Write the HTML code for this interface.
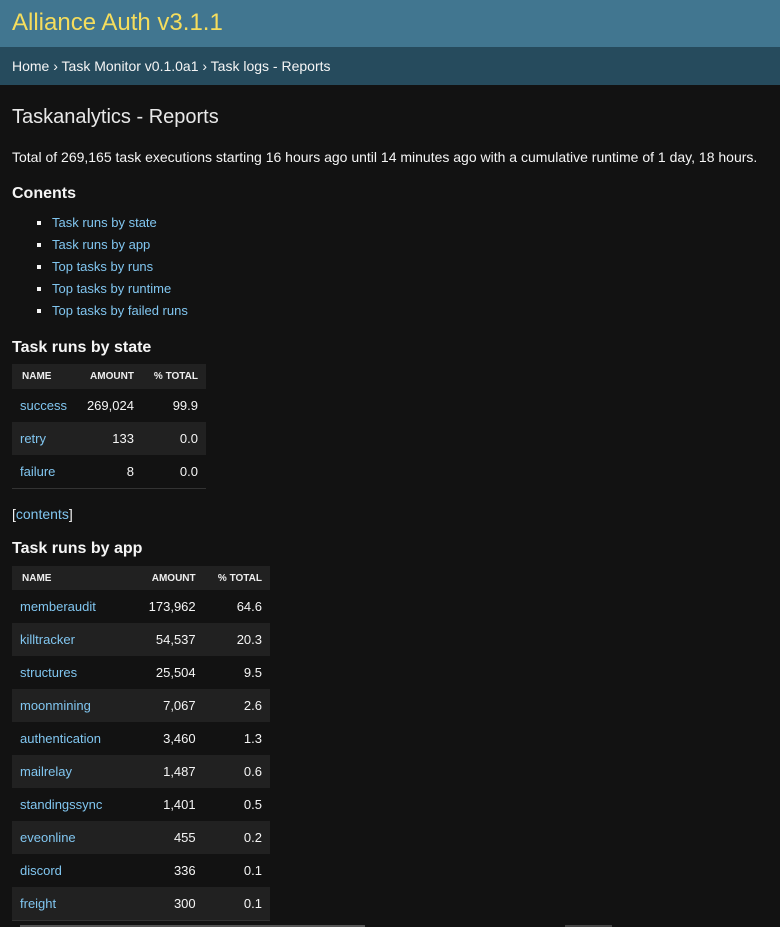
<!DOCTYPE html>
<html><head><style>
body{margin:0;background:#121212;color:#f5f5f5;font-family:"Liberation Sans",sans-serif;font-size:14px;width:780px;height:927px;overflow:hidden;position:relative}
a{color:#81c6f0;text-decoration:none}
#hdr{height:47px;background:#417690;}
#hdr div{position:absolute;left:12px;top:9px;font-size:24px;color:#f5dd5d}
#bc{height:38px;background:#264b5d;color:#f5f5f5;font-size:14px}
#bc div{position:absolute;left:12px;top:58px}
.abs{position:absolute}
h1{position:absolute;left:12px;top:106px;margin:0;font-size:20px;font-weight:normal;color:#e8e8e8}
h3{position:absolute;left:12px;margin:0;font-size:16px;font-weight:bold}
ul{position:absolute;left:12px;top:212px;margin:0;padding-left:40px;list-style:square}
li{line-height:22px;font-size:13px}
table{position:absolute;left:12px;border-collapse:collapse;font-size:13px}
th{background:#212121;font-size:10px;font-weight:bold;text-align:left;height:25px;padding:0 8px 0 10px;color:#eee}
td{height:33px;padding:0 8px 0 8px;}
tr:nth-child(even) td{background:#212121}
tbody tr:last-child td{border-bottom:1px solid #333}
.r{text-align:right}
.app th{height:24px}
.app td:nth-child(2),.app th:nth-child(2){padding-right:0}
</style></head><body>
<div id="hdr"><div>Alliance Auth v3.1.1</div></div>
<div id="bc"><div>Home › Task Monitor v0.1.0a1 › Task logs - Reports</div></div>
<h1>Taskanalytics - Reports</h1>
<div class="abs" style="left:12px;top:149px">Total of 269,165 task executions starting 16 hours ago until 14 minutes ago with a cumulative runtime of 1 day, 18 hours.</div>
<h3 style="top:185px">Conents</h3>
<ul><li><a>Task runs by state</a></li><li><a>Task runs by app</a></li><li><a>Top tasks by runs</a></li><li><a>Top tasks by runtime</a></li><li><a>Top tasks by failed runs</a></li></ul>
<h3 style="top:339px">Task runs by state</h3>
<table style="top:364px;width:194px">
<thead><tr><th>NAME</th><th class="r">AMOUNT</th><th class="r">% TOTAL</th></tr></thead>
<tbody>
<tr><td><a>success</a></td><td class="r">269,024</td><td class="r">99.9</td></tr>
<tr><td><a>retry</a></td><td class="r">133</td><td class="r">0.0</td></tr>
<tr><td><a>failure</a></td><td class="r">8</td><td class="r">0.0</td></tr>
</tbody></table>
<div class="abs" style="left:12px;top:506px">[<a>contents</a>]</div>
<h3 style="top:540px">Task runs by app</h3>
<table class="app" style="top:566px;width:258px">
<thead><tr><th>NAME</th><th class="r">AMOUNT</th><th class="r">% TOTAL</th></tr></thead>
<tbody>
<tr><td><a>memberaudit</a></td><td class="r">173,962</td><td class="r">64.6</td></tr>
<tr><td><a>killtracker</a></td><td class="r">54,537</td><td class="r">20.3</td></tr>
<tr><td><a>structures</a></td><td class="r">25,504</td><td class="r">9.5</td></tr>
<tr><td><a>moonmining</a></td><td class="r">7,067</td><td class="r">2.6</td></tr>
<tr><td><a>authentication</a></td><td class="r">3,460</td><td class="r">1.3</td></tr>
<tr><td><a>mailrelay</a></td><td class="r">1,487</td><td class="r">0.6</td></tr>
<tr><td><a>standingssync</a></td><td class="r">1,401</td><td class="r">0.5</td></tr>
<tr><td><a>eveonline</a></td><td class="r">455</td><td class="r">0.2</td></tr>
<tr><td><a>discord</a></td><td class="r">336</td><td class="r">0.1</td></tr>
<tr><td><a>freight</a></td><td class="r">300</td><td class="r">0.1</td></tr>
</tbody></table>
<div class="abs" style="left:20px;top:925px;width:345px;height:2px;background:#555"></div>
<div class="abs" style="left:565px;top:925px;width:47px;height:2px;background:#444"></div>
</body></html>
